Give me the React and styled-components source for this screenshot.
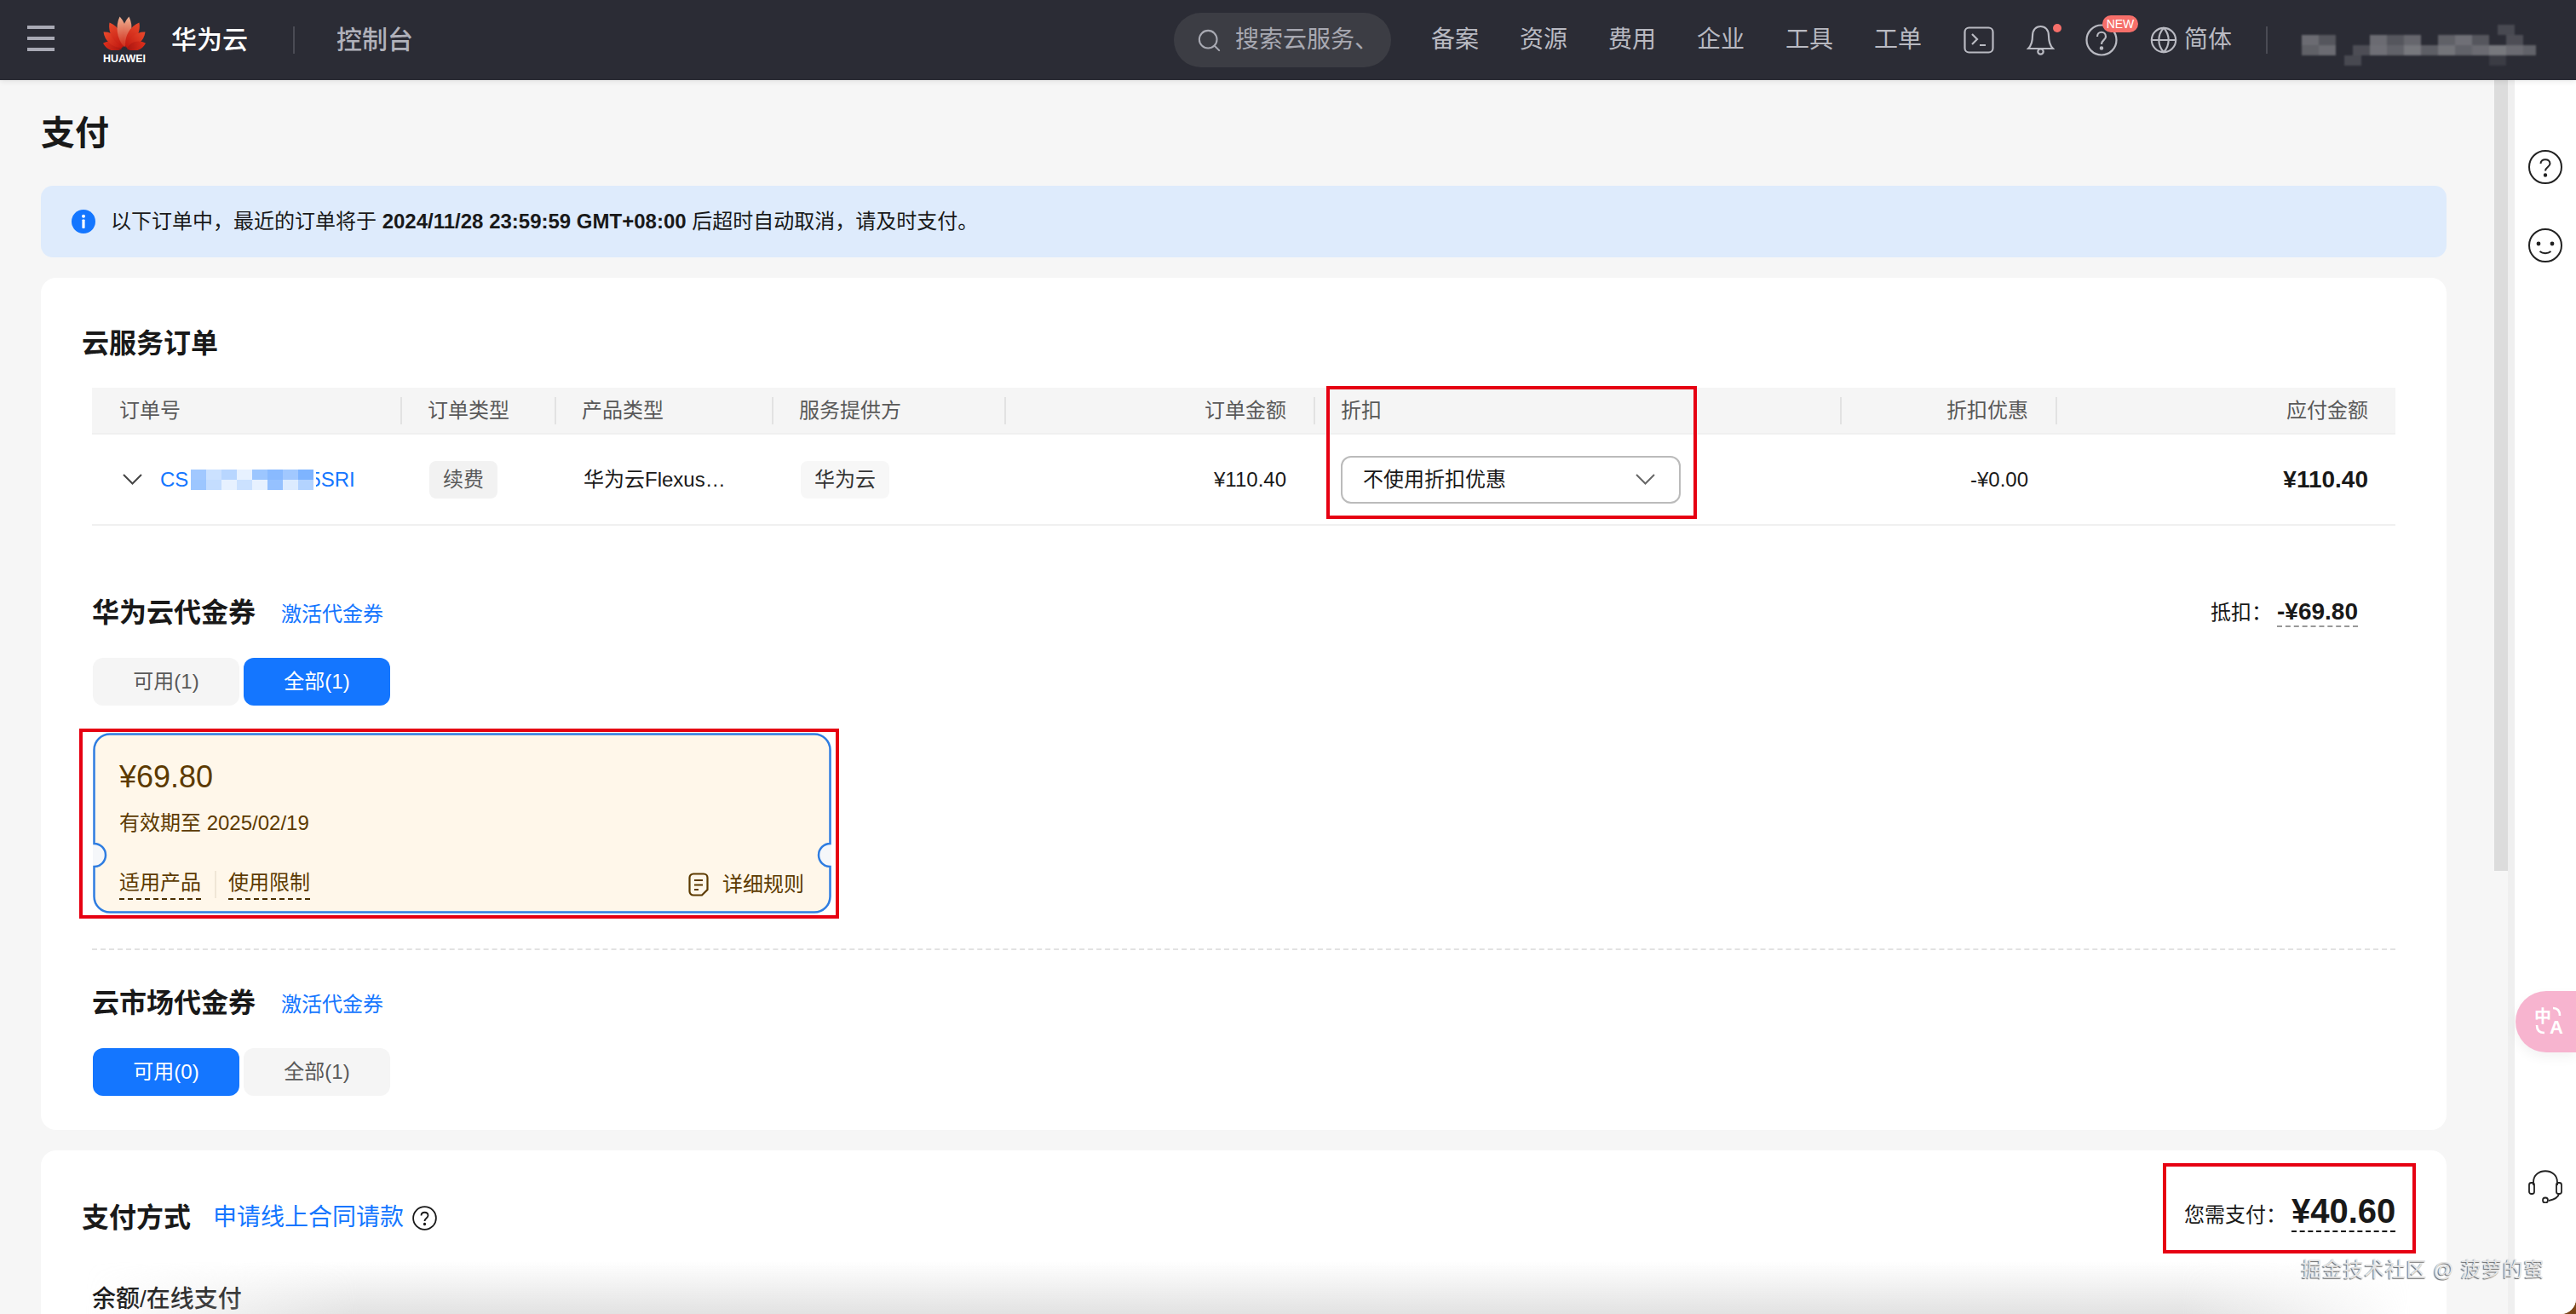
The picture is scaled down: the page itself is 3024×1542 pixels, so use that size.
import React from "react";
import styled, { createGlobalStyle } from "styled-components";
import { Search, Globe } from "lucide-react";

const GlobalStyle = createGlobalStyle`
  html, body {
    margin: 0;
    padding: 0;
    background: #7a4518;
  }
  * {
    box-sizing: border-box;
  }
`;

const Page = styled.div`
  position: relative;
  width: 3024px;
  height: 1542px;
  overflow: hidden;
  display: flex;
  flex-direction: column;
  background: #f6f6f6;
  border-bottom-right-radius: 18px;
  font-family: "Liberation Sans", "Noto Sans CJK SC", sans-serif;
  font-size: 24px;
  line-height: 32px;
  color: #191919;
`;

/* top bar */
const TopBar = styled.header`
  flex: none;
  height: 94px;
  display: flex;
  align-items: center;
  padding: 0 47px 0 32px;
  background: #2b2c35;
  box-shadow: 0 2px 6px rgba(0, 0, 0, 0.08);
  z-index: 2;
`;
const Burger = styled.div`
  width: 32px;
  height: 30px;
  display: flex;
  flex-direction: column;
  justify-content: space-between;
  margin-top: -4px;
  span {
    height: 4px;
    background: #a9aab5;
  }
`;
const Logo = styled.div`
  width: 52px;
  margin-left: 56px;
  display: flex;
  flex-direction: column;
  align-items: center;
  color: #fff;
  font-size: 12.5px;
  line-height: 13px;
  font-weight: 700;
  svg {
    display: block;
    margin-bottom: 4px;
  }
`;
const Brand = styled.div`
  margin-left: 29px;
  font-size: 30px;
  line-height: 40px;
  font-weight: 500;
  color: #fff;
`;
const BarDivider = styled.div`
  width: 2px;
  height: 32px;
  background: #4a4b54;
  margin-left: ${(p) => p.$left}px;
`;
const Console = styled.div`
  margin-left: 49px;
  font-size: 30px;
  line-height: 40px;
  font-weight: 500;
  color: #b0b1ba;
`;
const RightGroup = styled.div`
  margin-left: auto;
  display: flex;
  align-items: center;
`;
const SearchPill = styled.div`
  width: 255px;
  height: 64px;
  border-radius: 32px;
  background: #3c3d44;
  display: flex;
  align-items: center;
  gap: 15px;
  padding-left: 26px;
  overflow: hidden;
  color: #a8a9b2;
  font-size: 28px;
  white-space: nowrap;
  svg {
    flex: none;
  }
`;
const NavList = styled.nav`
  display: flex;
  gap: 48px;
  margin-left: 47px;
`;
const NavItem = styled.span`
  font-size: 28px;
  line-height: 40px;
  color: #b9bac2;
`;
const TopIcon = styled.div`
  position: relative;
  flex: none;
  margin-left: ${(p) => p.$left}px;
  height: 40px;
  display: flex;
  align-items: center;
`;
const RedDot = styled.span`
  position: absolute;
  top: 1px;
  right: -8px;
  width: 10px;
  height: 10px;
  border-radius: 50%;
  background: #f66f6a;
`;
const NewBadge = styled.span`
  position: absolute;
  top: -9px;
  left: 20px;
  width: 42px;
  height: 20px;
  border-radius: 10px;
  background: #f66f6a;
  color: #fff;
  font-size: 14px;
  line-height: 20px;
  text-align: center;
`;
const LangLabel = styled.span`
  margin-left: 7px;
  font-size: 28px;
  line-height: 40px;
  color: #b9bac2;
`;
const UserMosaic = styled.svg`
  display: block;
  margin-left: 40px;
  filter: blur(1px);
`;

/* page body */
const Body = styled.div`
  flex: 1;
  min-height: 0;
  display: flex;
`;
const Main = styled.main`
  width: 2928px;
  padding: 0 56px 0 48px;
  overflow: hidden;
`;
const PageTitle = styled.h1`
  margin: 0;
  height: 124px;
  display: flex;
  align-items: center;
  font-size: 40px;
  font-weight: 600;
  color: #191919;
`;
const Notice = styled.div`
  height: 84px;
  display: flex;
  align-items: center;
  gap: 18px;
  padding-left: 36px;
  border-radius: 14px;
  background: #deebfc;
  b {
    font-weight: 700;
  }
`;
const Card = styled.section`
  position: relative;
  margin-top: 24px;
  padding: ${(p) => p.$top}px 60px 40px;
  background: #fff;
  border-radius: 18px;
`;
const CardTitle = styled.h2`
  margin: 0 0 0 -12px;
  font-size: 32px;
  line-height: 40px;
  font-weight: 600;
`;

/* order table */
const Table = styled.div`
  position: relative;
  margin-top: 32px;
  width: 2704px;
`;
const columns = "362px 181px 255px 273px 363px 618px 253px 399px";
const HeadRow = styled.div`
  display: grid;
  grid-template-columns: ${columns};
  align-items: center;
  height: 55px;
  background: #f5f5f5;
  border-bottom: 2px solid #f0f0f0;
  color: #595959;
`;
const HeadCell = styled.div`
  height: 32px;
  padding: 0 ${(p) => (p.$right ? 32 : 0)}px 0 ${(p) => (p.$first ? 32 : 30)}px;
  border-left: ${(p) => (p.$first ? "none" : "2px solid #e2e2e2")};
  text-align: ${(p) => (p.$right ? "right" : "left")};
`;
const BodyRow = styled.div`
  display: grid;
  grid-template-columns: ${columns};
  align-items: center;
  height: 107px;
  border-bottom: 2px solid #f0f0f0;
`;
const BodyCell = styled.div`
  display: flex;
  align-items: center;
  justify-content: ${(p) => (p.$right ? "flex-end" : "flex-start")};
  padding: 0 ${(p) => (p.$right ? 32 : 0)}px 0 ${(p) => p.$left ?? 34}px;
  font-size: ${(p) => (p.$strong ? 28 : 24)}px;
  font-weight: ${(p) => (p.$strong ? 700 : 400)};
`;
const OrderLink = styled.span`
  display: flex;
  align-items: center;
  margin-left: 21px;
  color: #1476ff;
`;
const OrderBlur = styled.svg`
  flex: none;
  position: relative;
  margin: 0 -8px 0 3px;
`;
const Tag = styled.span`
  height: 44px;
  display: flex;
  align-items: center;
  padding: 0 ${(p) => p.$pad}px;
  border-radius: 8px;
  background: ${(p) => (p.$dim ? "#f2f2f2" : "#f7f7f7")};
  color: ${(p) => (p.$dim ? "#595959" : "#333")};
`;
const ProductName = styled.span`
  width: 168px;
  white-space: nowrap;
  overflow: hidden;
  text-overflow: ellipsis;
`;
const SelectBox = styled.div`
  width: 399px;
  height: 56px;
  display: flex;
  align-items: center;
  justify-content: space-between;
  padding: 0 28px 0 24px;
  border: 2px solid #bbb;
  border-radius: 12px;
`;
const RedFrame = styled.div`
  position: absolute;
  border: 4px solid #e60012;
  pointer-events: none;
`;
const DiscountFrame = styled(RedFrame)`
  left: 1449px;
  top: -2px;
  width: 435px;
  height: 156px;
`;

/* vouchers */
const VoucherHead = styled.div`
  display: flex;
  align-items: center;
  margin-top: ${(p) => p.$top}px;
  height: 40px;
`;
const VoucherTitle = styled.h3`
  margin: 0;
  font-size: 32px;
  line-height: 40px;
  font-weight: 600;
`;
const BlueLink = styled.a`
  margin-left: ${(p) => p.$left}px;
  color: #1476ff;
  font-size: ${(p) => p.$size}px;
  line-height: 40px;
  padding-top: ${(p) => p.$drop ?? 0}px;
`;
const Deduction = styled.div`
  margin-left: auto;
  margin-right: 44px;
  display: flex;
  align-items: center;
  gap: 6px;
  b {
    font-size: 28px;
    font-weight: 700;
    line-height: 32px;
    border-bottom: 2px dashed #999;
  }
`;
const TabRow = styled.div`
  display: flex;
  gap: 5px;
  margin-top: ${(p) => p.$top}px;
  margin-left: 1px;
`;
const TabButton = styled.div`
  width: 172px;
  height: 56px;
  display: flex;
  align-items: center;
  justify-content: center;
  border-radius: 12px;
  background: ${(p) => (p.$active ? "#1476ff" : "#f5f5f5")};
  color: ${(p) => (p.$active ? "#fff" : "#595959")};
`;
const Coupon = styled.div`
  position: relative;
  width: 867px;
  height: 212px;
  margin-top: 32px;
  margin-left: 1px;
  padding: 30px 32px 0 31px;
  color: #5c3a00;
  &::after {
    content: "";
    position: absolute;
    top: -5px;
    left: -16px;
    right: -9px;
    bottom: -6px;
    border: 4px solid #e60012;
    pointer-events: none;
  }
`;
const CouponShape = styled.svg`
  position: absolute;
  top: 0;
  left: 0;
`;
const CouponAmount = styled.div`
  position: relative;
  font-size: 36px;
  line-height: 44px;
`;
const CouponDate = styled.div`
  position: relative;
  margin-top: 14px;
  line-height: 36px;
`;
const CouponFoot = styled.div`
  position: relative;
  display: flex;
  align-items: center;
  margin-top: 36px;
`;
const DashedLabel = styled.span`
  line-height: 32px;
  padding-bottom: 2px;
  border-bottom: 2px dashed #4a2e00;
`;
const FootDivider = styled.span`
  width: 2px;
  height: 32px;
  margin: 0 14px 0 16px;
  background: #f0e6d6;
`;
const RuleLink = styled.div`
  margin-left: auto;
  display: flex;
  align-items: center;
  gap: 16px;
`;
const DashedDivider = styled.div`
  margin-top: 41px;
  border-top: 2px dashed #e2e2e2;
`;

/* payment */
const PayHead = styled.div`
  display: flex;
  align-items: center;
  height: 40px;
`;
const HelpMark = styled.svg`
  display: block;
  margin-left: 10px;
`;
const PayBox = styled.div`
  position: absolute;
  top: 15px;
  right: 36px;
  width: 297px;
  height: 106px;
  display: flex;
  align-items: center;
  gap: 6px;
  padding: 8px 0 0 21px;
  border: 4px solid #e60012;
  b {
    font-size: 40px;
    line-height: 46px;
    font-weight: 700;
    border-bottom: 2px dashed #191919;
  }
`;
const PayLabel = styled.span`
  margin-top: 8px;
`;
const PayMethod = styled.div`
  margin-top: 56px;
  font-size: 28px;
  line-height: 40px;
  font-weight: 500;
`;

/* scrollbar and side rail */
const ScrollTrack = styled.div`
  flex: none;
  width: 24px;
  background: linear-gradient(to right, #f6f6f6 0 16px, #efefef 16px);
`;
const ScrollThumb = styled.div`
  width: 16px;
  height: 928px;
  background: #dcdcdc;
`;
const SideRail = styled.aside`
  flex: none;
  width: 72px;
  display: flex;
  flex-direction: column;
  align-items: center;
  gap: 52px;
  padding: 82px 0 130px;
  background: #fff;
`;
const TranslatePill = styled.div`
  align-self: flex-end;
  width: 71px;
  height: 72px;
  margin-top: auto;
  margin-bottom: 85px;
  border-radius: 36px 0 0 36px;
  background: #f7b4cf;
  box-shadow: 0 6px 14px rgba(0, 0, 0, 0.05);
`;
const BottomShade = styled.div`
  position: absolute;
  left: 0;
  right: 0;
  bottom: 0;
  height: 62px;
  background: linear-gradient(to top, rgba(205, 205, 205, 0.58), rgba(205, 205, 205, 0));
  mask-image: linear-gradient(to right, transparent 100px, #000 420px, #000 2560px, transparent 2830px);
  pointer-events: none;
`;
const Watermark = styled.div`
  position: absolute;
  right: 37px;
  bottom: 35px;
  font-size: 24px;
  line-height: 34px;
  letter-spacing: 0.6px;
  color: #e4e4e4;
  text-shadow: -1px 1px 1px #666;
  pointer-events: none;
`;

const petals = [
  { angle: -74, length: 26, width: 7, tone: "url(#petalDark)" },
  { angle: -50, length: 32, width: 7.5, tone: "url(#petalRed)" },
  { angle: -29, length: 36, width: 7.5, tone: "url(#petalRed)" },
  { angle: -8, length: 39, width: 7, tone: "url(#petalPale)" },
  { angle: 8, length: 39, width: 7, tone: "url(#petalPale)" },
  { angle: 29, length: 36, width: 7.5, tone: "url(#petalRed)" },
  { angle: 50, length: 32, width: 7.5, tone: "url(#petalRed)" },
  { angle: 74, length: 26, width: 7, tone: "url(#petalDark)" },
];

const HuaweiMark = () => (
  <svg width="52" height="40" viewBox="0 0 52 40">
    <defs>
      <linearGradient id="petalPale" x1="0" y1="0" x2="0" y2="1">
        <stop offset="0" stopColor="#f0b394" />
        <stop offset="1" stopColor="#cf2a18" />
      </linearGradient>
      <linearGradient id="petalRed" x1="0" y1="0" x2="0" y2="1">
        <stop offset="0" stopColor="#ea4a2c" />
        <stop offset="1" stopColor="#c0170f" />
      </linearGradient>
      <linearGradient id="petalDark" x1="0" y1="0" x2="0" y2="1">
        <stop offset="0" stopColor="#e0301c" />
        <stop offset="1" stopColor="#a81510" />
      </linearGradient>
    </defs>
    {petals.map((p) => (
      <path
        key={p.angle}
        transform={`translate(26 39) rotate(${p.angle})`}
        d={`M0 -3 C${-p.width} ${-p.length * 0.35} ${-p.width} ${-p.length * 0.75} 0 ${-p.length} C${p.width} ${-p.length * 0.75} ${p.width} ${-p.length * 0.35} 0 -3Z`}
        fill={p.tone}
      />
    ))}
  </svg>
);

const userCells = [
  [0, 0, 0.3], [20, 0, 0.2], [80, 0, 0.3], [100, 0, 0.2], [120, 0, 0.28], [160, 0, 0.25], [180, 0, 0.32], [200, 0, 0.2], [240, 0, 0.16],
  [0, 12, 0.25], [20, 12, 0.3], [60, 12, 0.16], [80, 12, 0.32], [100, 12, 0.26], [120, 12, 0.36], [140, 12, 0.24], [160, 12, 0.34], [180, 12, 0.26], [200, 12, 0.3], [220, 12, 0.36], [240, 12, 0.3], [260, 12, 0.26],
  [50, 24, 0.14], [220, 24, 0.08], [230, -12, 0.14],
];

const UserBlock = () => (
  <UserMosaic width="275" height="60" viewBox="0 -14 275 60">
    {userCells.map(([x, y, o]) => (
      <rect key={`${x}-${y}`} x={x} y={y + 10} width="20" height="12" fill="#fff" opacity={o} />
    ))}
  </UserMosaic>
);

const orderCells = [
  [0, 0, 0.4], [18, 0, 0.22], [36, 0, 0.3], [54, 0, 0.1], [72, 0, 0.42], [90, 0, 0.5], [108, 0, 0.4], [126, 0, 0.55],
  [0, 12, 0.42], [18, 12, 0.25], [36, 12, 0.1], [54, 12, 0.22], [72, 12, 0.1], [90, 12, 0.45], [108, 12, 0.15], [126, 12, 0.32],
];

const OrderMosaic = () => (
  <OrderBlur width="147" height="24" viewBox="0 0 147 24">
    <rect width="147" height="24" fill="#fff" />
    {orderCells.map(([x, y, o]) => (
      <rect key={`${x}-${y}`} x={x} y={y} width="18" height="12" fill="#1476ff" opacity={o} />
    ))}
  </OrderBlur>
);

const Chevron = ({ width = 23, color = "#444" }) => (
  <svg width={width} height="13" viewBox="0 0 23 13" fill="none" stroke={color} strokeWidth="2">
    <path d="M1 1 L11.5 11.5 L22 1" />
  </svg>
);

const CouponOutline = () => (
  <CouponShape width="867" height="212" viewBox="0 0 867 212">
    <circle cx="1.5" cy="143.5" r="13.5" fill="#f5f7fa" />
    <circle cx="865.5" cy="143.5" r="13.5" fill="#f5f7fa" />
    <path
      d="M20 1.5 H847 A18.5 18.5 0 0 1 865.5 20 V130 A13.5 13.5 0 0 0 865.5 157 V192 A18.5 18.5 0 0 1 847 210.5 H20 A18.5 18.5 0 0 1 1.5 192 V157 A13.5 13.5 0 0 0 1.5 130 V20 A18.5 18.5 0 0 1 20 1.5Z"
      fill="#fff7ea"
      stroke="#2f7de1"
      strokeWidth="2.5"
    />
  </CouponShape>
);

const App = () => (
  <Page>
    <GlobalStyle />
    <TopBar>
      <Burger>
        <span />
        <span />
        <span />
      </Burger>
      <Logo>
        <HuaweiMark />
        HUAWEI
      </Logo>
      <Brand>华为云</Brand>
      <BarDivider $left={53} />
      <Console>控制台</Console>
      <RightGroup>
        <SearchPill>
          <Search size={31} strokeWidth={1.6} color="#a8a9b2" />
          搜索云服务、
        </SearchPill>
        <NavList>
          {["备案", "资源", "费用", "企业", "工具", "工单"].map((item) => (
            <NavItem key={item}>{item}</NavItem>
          ))}
        </NavList>
        <TopIcon $left={49}>
          <svg width="36" height="32" viewBox="0 0 36 32" fill="none" stroke="#b9bac2" strokeWidth="2.2">
            <rect x="1.5" y="1.5" width="33" height="29" rx="5" />
            <path d="M10 9 L16 15 L10 21 M19 22 H26" />
          </svg>
        </TopIcon>
        <TopIcon $left={38}>
          <svg width="33" height="36" viewBox="0 0 33 36" fill="none" stroke="#b9bac2" strokeWidth="2.2">
            <path d="M2 28 C6 24 7 20 7 13 C7 6 11 2 16.5 2 C22 2 26 6 26 13 C26 20 27 24 31 28 Z" />
            <circle cx="16.5" cy="31.5" r="3.2" />
          </svg>
          <RedDot />
        </TopIcon>
        <TopIcon $left={36}>
          <svg width="38" height="38" viewBox="0 0 38 38" fill="none" stroke="#b9bac2" strokeWidth="2.2">
            <circle cx="19" cy="19" r="17.5" />
            <path d="M14 15 C14 8 24 8 24 15 C24 19 19 19 19 24" />
            <circle cx="19" cy="28.5" r="1.2" fill="#b9bac2" />
          </svg>
          <NewBadge>NEW</NewBadge>
        </TopIcon>
        <TopIcon $left={37}>
          <Globe size={34} strokeWidth={1.5} color="#b9bac2" />
          <LangLabel>简体</LangLabel>
        </TopIcon>
        <BarDivider $left={40} />
        <UserBlock />
      </RightGroup>
    </TopBar>

    <Body>
      <Main>
        <PageTitle>支付</PageTitle>
        <Notice>
          <svg width="28" height="28" viewBox="0 0 28 28">
            <circle cx="14" cy="14" r="14" fill="#1476ff" />
            <circle cx="14" cy="7.8" r="2" fill="#fff" />
            <rect x="12.4" y="11.5" width="3.2" height="10.5" rx="0.8" fill="#fff" />
          </svg>
          <span>
            以下订单中，最近的订单将于 <b>2024/11/28 23:59:59 GMT+08:00</b> 后超时自动取消，请及时支付。
          </span>
        </Notice>

        <Card $top={57}>
          <CardTitle>云服务订单</CardTitle>
          <Table>
            <HeadRow>
              <HeadCell $first>订单号</HeadCell>
              <HeadCell>订单类型</HeadCell>
              <HeadCell>产品类型</HeadCell>
              <HeadCell>服务提供方</HeadCell>
              <HeadCell $right>订单金额</HeadCell>
              <HeadCell>折扣</HeadCell>
              <HeadCell $right>折扣优惠</HeadCell>
              <HeadCell $right>应付金额</HeadCell>
            </HeadRow>
            <BodyRow>
              <BodyCell $left={36}>
                <Chevron />
                <OrderLink>
                  CS
                  <OrderMosaic />
                  5SRI
                </OrderLink>
              </BodyCell>
              <BodyCell>
                <Tag $dim $pad={16}>续费</Tag>
              </BodyCell>
              <BodyCell>
                <ProductName>华为云Flexus云服务器</ProductName>
              </BodyCell>
              <BodyCell>
                <Tag $pad={16}>华为云</Tag>
              </BodyCell>
              <BodyCell $right>¥110.40</BodyCell>
              <BodyCell $left={32}>
                <SelectBox>
                  不使用折扣优惠
                  <Chevron color="#666" />
                </SelectBox>
              </BodyCell>
              <BodyCell $right>-¥0.00</BodyCell>
              <BodyCell $right $strong>¥110.40</BodyCell>
            </BodyRow>
            <DiscountFrame />
          </Table>

          <VoucherHead $top={82}>
            <VoucherTitle>华为云代金券</VoucherTitle>
            <BlueLink $left={30} $size={24} $drop={4}>激活代金券</BlueLink>
            <Deduction>
              抵扣：
              <b>-¥69.80</b>
            </Deduction>
          </VoucherHead>
          <TabRow $top={33}>
            <TabButton>可用(1)</TabButton>
            <TabButton $active>全部(1)</TabButton>
          </TabRow>
          <Coupon>
            <CouponOutline />
            <CouponAmount>¥69.80</CouponAmount>
            <CouponDate>有效期至 2025/02/19</CouponDate>
            <CouponFoot>
              <DashedLabel>适用产品</DashedLabel>
              <FootDivider />
              <DashedLabel>使用限制</DashedLabel>
              <RuleLink>
                <svg width="24" height="28" viewBox="0 0 24 28" fill="none" stroke="#5c3a00" strokeWidth="2.2">
                  <path d="M16 26.5 H6 A4.5 4.5 0 0 1 1.5 22 V6 A4.5 4.5 0 0 1 6 1.5 H18 A4.5 4.5 0 0 1 22.5 6 V20 L16 26.5Z" />
                  <path d="M7 9 H17 M7 14.5 H17 M7 20 H12" />
                </svg>
                详细规则
              </RuleLink>
            </CouponFoot>
          </Coupon>
          <DashedDivider />
          <VoucherHead $top={42}>
            <VoucherTitle>云市场代金券</VoucherTitle>
            <BlueLink $left={30} $size={24} $drop={4}>激活代金券</BlueLink>
          </VoucherHead>
          <TabRow $top={33}>
            <TabButton $active>可用(0)</TabButton>
            <TabButton>全部(1)</TabButton>
          </TabRow>
        </Card>

        <Card $top={59}>
          <PayHead>
            <CardTitle>支付方式</CardTitle>
            <BlueLink $left={26} $size={28}>申请线上合同请款</BlueLink>
            <HelpMark width="29" height="29" viewBox="0 0 29 29" fill="none" stroke="#191919" strokeWidth="1.8">
              <circle cx="14.5" cy="14.5" r="13.4" />
              <path d="M10.5 11.5 C10.5 6.5 18.5 6.5 18.5 11.5 C18.5 14.5 14.5 14.5 14.5 18" />
              <circle cx="14.5" cy="21.5" r="0.8" fill="#191919" />
            </HelpMark>
          </PayHead>
          <PayBox>
            <PayLabel>您需支付：</PayLabel>
            <b>¥40.60</b>
          </PayBox>
          <PayMethod>余额/在线支付</PayMethod>
        </Card>
      </Main>

      <ScrollTrack>
        <ScrollThumb />
      </ScrollTrack>

      <SideRail>
        <svg width="40" height="40" viewBox="0 0 40 40" fill="none" stroke="#222" strokeWidth="2">
          <circle cx="20" cy="20" r="19" />
          <path d="M14.5 16 C14.5 9.5 25.5 9.5 25.5 16 C25.5 20 20 20 20 24.5" />
          <circle cx="20" cy="29.5" r="1.2" fill="#222" />
        </svg>
        <svg width="40" height="40" viewBox="0 0 40 40" fill="none" stroke="#222" strokeWidth="2">
          <circle cx="20" cy="20" r="19" />
          <circle cx="12" cy="18" r="2.4" fill="#222" stroke="none" />
          <circle cx="28" cy="18" r="2.4" fill="#222" stroke="none" />
          <path d="M13.5 27 C17 30 23 30 26.5 27" />
        </svg>
        <TranslatePill>
          <svg width="71" height="72" viewBox="0 0 71 72" fill="#fff">
            <text x="22" y="37" fontSize="20" fontWeight="700" fontFamily="'Noto Sans CJK SC', sans-serif">中</text>
            <text x="40" y="50" fontSize="22" fontWeight="700" fontFamily="'Liberation Sans', sans-serif">A</text>
            <path d="M44 20 C49 20 52 23 52 29 M25 40 C25 46 28 49 34 49" fill="none" stroke="#fff" strokeWidth="2.6" />
          </svg>
        </TranslatePill>
        <svg width="40" height="40" viewBox="0 0 40 40" fill="none" stroke="#222" strokeWidth="1.8">
          <path d="M6 19 V15 C6 -2 34 -2 34 15 V19" />
          <rect x="1" y="16" width="6" height="13" rx="2.5" />
          <rect x="33" y="16" width="6" height="13" rx="2.5" />
          <path d="M36 29 C35 34 29 36 24 37" />
          <circle cx="20" cy="36.5" r="3" />
        </svg>
      </SideRail>
    </Body>

    <BottomShade />
    <Watermark>掘金技术社区 @ 菠萝的蜜</Watermark>
  </Page>
);

export default App;
